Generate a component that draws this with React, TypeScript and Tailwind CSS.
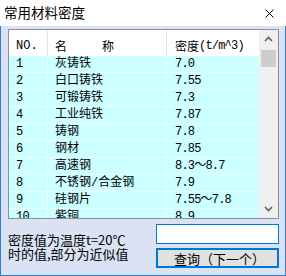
import React from "react";

type Row = { no: string; name: string; density: string };

const rows: Row[] = [
  { no: "1", name: "灰铸铁", density: "7.0" },
  { no: "2", name: "白口铸铁", density: "7.55" },
  { no: "3", name: "可锻铸铁", density: "7.3" },
  { no: "4", name: "工业纯铁", density: "7.87" },
  { no: "5", name: "铸钢", density: "7.8" },
  { no: "6", name: "钢材", density: "7.85" },
  { no: "7", name: "高速钢", density: "8.3～8.7" },
  { no: "8", name: "不锈钢/合金钢", density: "7.9" },
  { no: "9", name: "硅钢片", density: "7.55～7.8" },
  { no: "10", name: "紫铜", density: "8.9" },
];

const mono = "font-['Liberation_Mono','Noto_Sans_CJK_SC',monospace]";
const cjk = "font-['Noto_Sans_CJK_SC','Liberation_Sans',sans-serif]";

function Chevron({ up }: { up?: boolean }) {
  return (
    <svg width="9" height="6" viewBox="0 0 9 6">
      <polyline
        points={up ? "1,5 4.5,1.5 8,5" : "1,1 4.5,4.5 8,1"}
        fill="none"
        stroke="#606060"
        strokeWidth="1.6"
      />
    </svg>
  );
}

export default function App() {
  return (
    <div className={`w-[286px] h-[276px] bg-white flex flex-col text-black ${cjk}`}>
      {/* Title bar */}
      <div className="h-[26px] flex items-center justify-between pl-[4px] pr-[12px] bg-white">
        <span className="text-[13.5px] leading-none">常用材料密度</span>
        <svg width="9" height="9" viewBox="0 0 9 9">
          <path d="M0.5 0.5 L8.5 8.5 M8.5 0.5 L0.5 8.5" stroke="#000" strokeWidth="1" />
        </svg>
      </div>

      {/* Body */}
      <div className="flex-1 bg-[#dae2f4] border-x border-b border-[#2b7fd8] pl-[7px] pt-[3px] flex flex-col">
        {/* List */}
        <div className="w-[271px] h-[190px] border border-[#8a8f99] bg-white flex">
          <div className="w-[250px] flex flex-col overflow-hidden">
            <div className="h-[26px] flex shrink-0 bg-white text-[12px]">
              <div className={`w-[39px] pl-[7px] pt-[6px] flex items-center border-r border-[#e5e5e5] ${mono}`}>
                NO.
              </div>
              <div className="w-[119px] pl-[7px] pt-[6px] flex items-center border-r border-[#e5e5e5]">
                <span>名</span>
                <span className="ml-[35px]">称</span>
              </div>
              <div className="flex-1 pl-[8px] pt-[6px] flex items-center">
                <span>密度</span>
                <span className={`${mono} tracking-[-0.8px]`}>(t/m^3)</span>
              </div>
            </div>
            {rows.map((r) => (
              <div key={r.no} className="h-[17px] shrink-0 flex bg-[#ccffff] text-[12px] leading-none">
                <div className={`w-[39px] pl-[7px] flex items-center border-r border-b border-[#eaffff] tracking-[-0.8px] ${mono}`}>
                  {r.no}
                </div>
                <div className={`w-[119px] pl-[7px] flex items-center border-r border-b border-[#eaffff] ${mono}`}>
                  {r.name}
                </div>
                <div className={`flex-1 pl-[8px] flex items-center border-b border-[#eaffff] tracking-[-0.8px] ${mono}`}>
                  {r.density}
                </div>
              </div>
            ))}
          </div>
          {/* Scrollbar */}
          <div className="flex-1 bg-[#f0f0f0] flex flex-col items-center">
            <div className="h-[18px] w-full flex items-center justify-center">
              <Chevron up />
            </div>
            <div className="mt-[2px] w-[15px] h-[17px] bg-[#cdcdcd]" />
            <div className="flex-1" />
            <div className="h-[18px] w-full flex items-center justify-center">
              <Chevron />
            </div>
          </div>
        </div>

        {/* Bottom */}
        <div className="mt-[5px] flex">
          <div className="flex-1 pt-[9px] text-[13px] leading-[14px]">
            <div>密度值为温度t=20℃</div>
            <div>时的值,部分为近似值</div>
          </div>
          <div className="w-[123px] mr-[6px] flex flex-col gap-[4px]">
            <div className="h-[20px] bg-white border border-[#0078d7]" />
            <div className="h-[20px] bg-[#e1e1e1] border-2 border-[#0078d7] flex items-center justify-center text-[13px] leading-none pl-[4px]">
              查询（下一个）
            </div>
          </div>
        </div>
      </div>
    </div>
  );
}
